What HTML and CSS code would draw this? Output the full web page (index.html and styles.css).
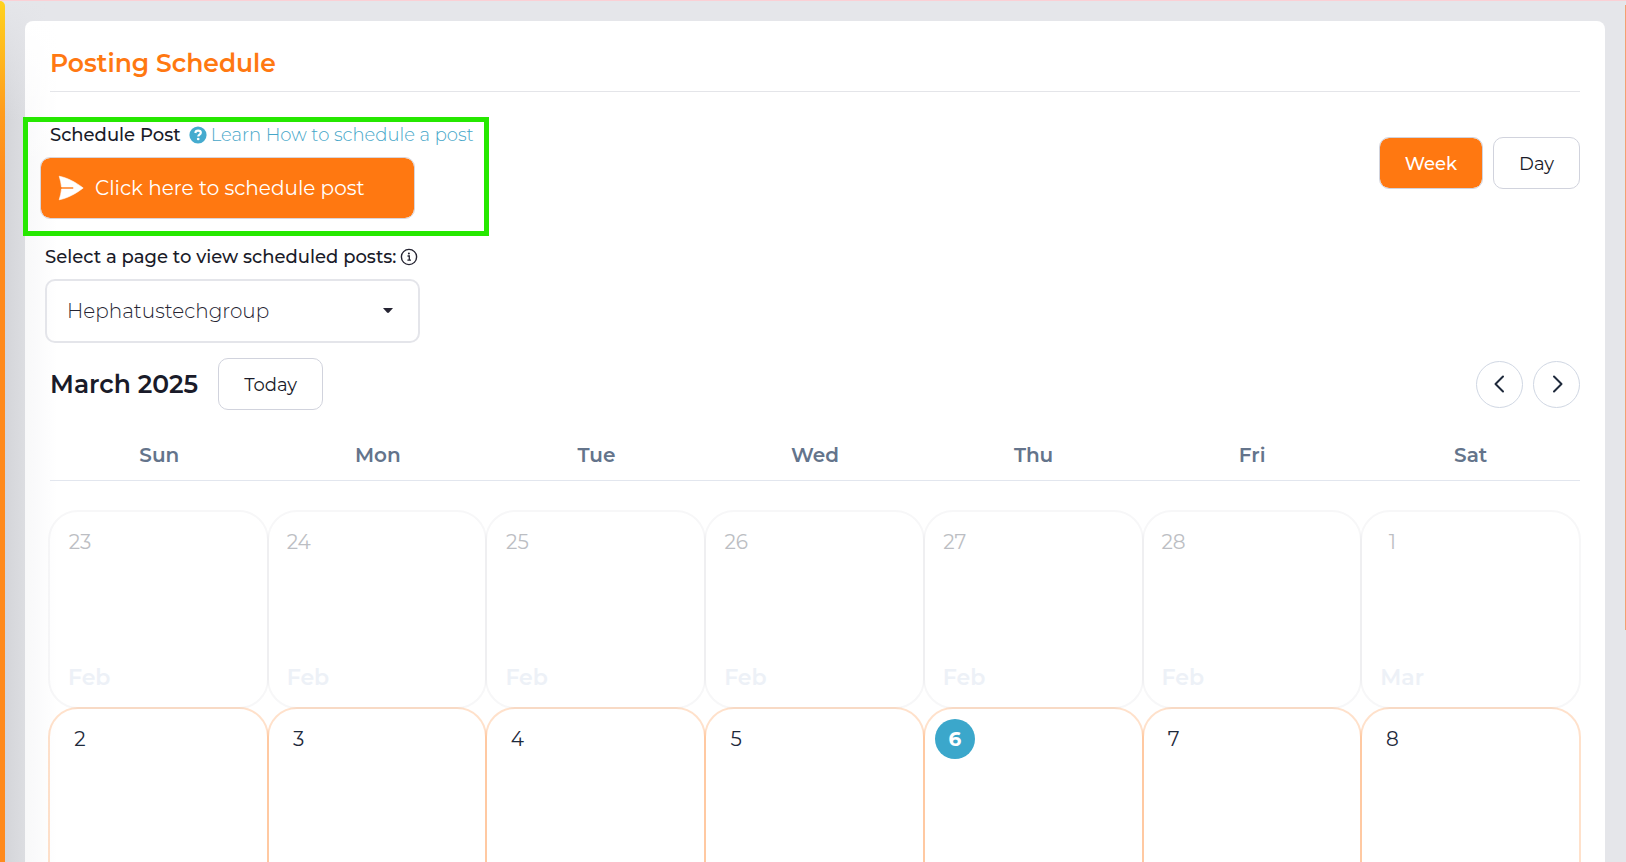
FILE: index.html
```html
<!DOCTYPE html>
<html lang="en">
<head>
<meta charset="utf-8">
<meta name="viewport" content="width=device-width, initial-scale=1">
<title>Posting Schedule</title>
<link rel="stylesheet" href="styles.css">
</head>
<body>
<div class="page">
  <div class="rail"></div>
  <main class="main">
    <section class="card">
      <header class="card-header"><h1 class="title">Posting Schedule</h1></header>

      <div class="toolbar">
        <div class="schedule">
          <div class="schedule-head">
            <h2 class="label">Schedule Post</h2>
            <a class="help" href="#">
              <svg class="help-icon" viewBox="0 0 18 18" aria-hidden="true"><circle cx="9" cy="9" r="8.6" fill="#45abcf"/><path d="M6.300 7C6.500 5.300 7.500 4.600 9.100 4.600c1.600 0 2.700.8 2.700 2.200 0 1.900-2.500 1.800-2.500 3.600" fill="none" stroke="#fff" stroke-width="2.200"/><circle cx="9.200" cy="13" r="1.350" fill="#fff"/></svg>
              <span>Learn How to schedule a post</span>
            </a>
          </div>
          <button class="cta" type="button">
            <svg class="cta-icon" viewBox="0 0 26 26" aria-hidden="true"><path d="M1.200 1.200C10 3 18 7.500 25.200 13 18 18.500 10 23 1.200 24.800 2.300 21 3.200 18 3.500 14H15.500V12H3.500C3.200 8 2.300 5 1.200 1.200Z" fill="#fff" stroke="#fff" stroke-width=".6" stroke-linejoin="round"/></svg>
            <span>Click here to schedule post</span>
          </button>
          <div class="highlight"></div>
        </div>
        <div class="views">
          <button class="btn btn-active" type="button">Week</button>
          <button class="btn" type="button">Day</button>
        </div>
      </div>

      <div class="picker">
        <div class="picker-head">
          <label class="label" for="page-select">Select a page to view scheduled posts:</label>
          <svg class="info-icon" viewBox="0 0 18 18" aria-hidden="true"><circle cx="9" cy="9" r="7.6" fill="none" stroke="#252432" stroke-width="1.400"/><path d="M7.500 8H9.300V12M7.400 12.200H11" fill="none" stroke="#252432" stroke-width="1.300"/><circle cx="8.900" cy="5.500" r="1" fill="#252432"/></svg>
        </div>
        <div class="select-wrap">
          <select class="select" id="page-select"><option>Hephatustechgroup</option></select>
          <svg class="caret" viewBox="0 0 10 6" aria-hidden="true"><path d="M0 0H10L6 4.500Q5 5.400 4 4.500Z" fill="#252432"/></svg>
        </div>
      </div>

      <div class="month-bar">
        <h2 class="month">March 2025</h2>
        <button class="btn" type="button">Today</button>
        <div class="nav">
          <button class="round" type="button" aria-label="Previous"><svg viewBox="0 0 18 18"><path d="M12 1.500 4.500 9 12 16.500"/></svg></button>
          <button class="round" type="button" aria-label="Next"><svg viewBox="0 0 18 18"><path d="M6 1.500 13.500 9 6 16.500"/></svg></button>
        </div>
      </div>

      <div class="weekdays"><span>Sun</span><span>Mon</span><span>Tue</span><span>Wed</span><span>Thu</span><span>Fri</span><span>Sat</span></div>

      <div class="days">
        <div class="day past"><span class="num">23</span><span class="mon">Feb</span></div>
        <div class="day past"><span class="num">24</span><span class="mon">Feb</span></div>
        <div class="day past"><span class="num">25</span><span class="mon">Feb</span></div>
        <div class="day past"><span class="num">26</span><span class="mon">Feb</span></div>
        <div class="day past"><span class="num">27</span><span class="mon">Feb</span></div>
        <div class="day past"><span class="num">28</span><span class="mon">Feb</span></div>
        <div class="day past"><span class="num">1</span><span class="mon">Mar</span></div>
        <div class="day"><span class="num">2</span></div>
        <div class="day"><span class="num">3</span></div>
        <div class="day"><span class="num">4</span></div>
        <div class="day"><span class="num">5</span></div>
        <div class="day"><span class="num today">6</span></div>
        <div class="day"><span class="num">7</span></div>
        <div class="day"><span class="num">8</span></div>
      </div>
    </section>
  </main>
  <div class="thumb"></div>
</div>
</body>
</html>
```
FILE: styles.css
```css
* { box-sizing: border-box; }
body {
  margin: 0;
  font-family: Montserrat, Inter, "Open Sans", sans-serif;
  color: #1a1b29;
  background: #e5e6ea;
}
h1, h2 { margin: 0; }
button, select { font-family: inherit; color: inherit; }
button { cursor: pointer; }
.page {
  position: relative;
  display: flex;
  height: 100vh;
  overflow: hidden;
  border-top: 1px solid #fbd0d5;
}
.rail {
  flex: none;
  width: 5px;
  border-top-right-radius: 5px;
  background: linear-gradient(#ffd21e, #ff9d1d 110px, #ff8a1c 180px);
}
.main {
  flex: 1;
  min-width: 0;
  padding: 20px 21px 0 20px;
  background: linear-gradient(#e5e6ea, rgba(229, 230, 234, 0) 120px), linear-gradient(90deg, #d4d5d9, #dcdde1 20px, #e5e6ea 40px);
}
.card {
  min-height: 100%;
  padding: 0 25px;
  border-radius: 8px;
  background: linear-gradient(#fff, rgba(255, 255, 255, 0) 150px), linear-gradient(90deg, #f8f8f9, #fff 32px);
}
.card-header {
  display: flex;
  align-items: center;
  height: 71px;
  padding-top: 14px;
  border-bottom: 1px solid #e4e5e9;
}
.title, .month { font-size: 25px; line-height: 32px; font-weight: 600; }
.title { color: #ff7811; }
.toolbar { display: flex; justify-content: space-between; padding-top: 32px; }
.schedule { position: relative; }
.schedule-head, .help, .picker-head { display: flex; align-items: center; }
.schedule-head { gap: 8px; height: 22px; }
.label { font-size: 18px; line-height: 22px; font-weight: 500; }
.help { gap: 4px; font-size: 18px; line-height: 22px; font-weight: 300; color: #45a6c8; text-decoration: none; }
.help-icon, .info-icon { flex: none; width: 18px; height: 18px; }
.cta {
  display: flex;
  align-items: center;
  gap: 11px;
  width: 375px;
  height: 62px;
  margin: 11px 0 0 -10px;
  padding: 0 17px;
  border: 1px solid #d9d5da;
  border-radius: 10px;
  background: #ff7811;
  background-clip: padding-box;
  color: #fff;
  font-size: 20px;
}
.cta-icon { width: 26px; height: 26px; }
.highlight {
  position: absolute;
  top: -7px;
  left: -27px;
  width: 466px;
  height: 119px;
  border: 5px solid #26e800;
  pointer-events: none;
}
.views { display: flex; gap: 10px; padding-top: 13px; }
.btn {
  height: 52px;
  padding: 1px 25px 0;
  border: 1px solid #d1d3dd;
  border-radius: 10px;
  background: #fff;
  font-size: 18px;
}
.btn-active { background: #ff7811; background-clip: padding-box; color: #fff; font-weight: 500; }
.picker { width: 375px; margin: 26px 0 0 -5px; }
.picker-head { gap: 4px; height: 24px; white-space: nowrap; }
.select-wrap { position: relative; margin-top: 10px; }
.select {
  width: 100%;
  height: 64px;
  padding: 0 20px;
  border: 2px solid #e4e5ea;
  border-radius: 10px;
  background: transparent;
  appearance: none;
  font-size: 20px;
  font-weight: 300;
  color: #252432;
}
.caret { position: absolute; top: 29px; right: 27px; width: 10px; height: 6px; pointer-events: none; }
.month-bar { display: flex; align-items: center; gap: 20px; margin-top: 15px; }
.nav { display: flex; gap: 10px; margin-left: auto; }
.round {
  display: grid;
  place-items: center;
  width: 47px;
  height: 47px;
  padding: 0;
  border: 1px solid #d0d7e3;
  border-radius: 50%;
  background: #fff;
}
.round svg { width: 18px; height: 18px; fill: none; stroke: #1e293b; stroke-width: 2; stroke-linecap: round; stroke-linejoin: round; }
.weekdays, .days { display: grid; grid-template-columns: repeat(7, 1fr); }
.weekdays {
  height: 71px;
  padding-top: 32px;
  border-bottom: 1px solid #e2e6ee;
  font-size: 20px;
  line-height: 26px;
  font-weight: 600;
  text-align: center;
  color: #64748b;
}
.days { grid-auto-rows: 197px; margin-left: -1px; padding-top: 30px; }
.day {
  display: flex;
  flex-direction: column;
  align-items: flex-start;
  justify-content: space-between;
  margin: -1px;
  padding: 10px 10px 16px;
  border: 2px solid rgba(255, 120, 17, .22);
  border-radius: 30px;
}
.past { border-color: rgba(30, 41, 59, .035); }
.num {
  display: grid;
  place-items: center;
  width: 40px;
  height: 40px;
  border-radius: 50%;
  font-size: 20px;
  color: #1e293b;
}
.past .num { color: #bcbec3; }
.today { background: #3ba7cb; color: #fff; font-weight: 700; }
.mon { padding-left: 8px; font-size: 22px; line-height: 26px; font-weight: 600; color: #edf1f7; }
.thumb {
  position: absolute;
  top: 4px;
  right: 0;
  width: 1px;
  height: 625px;
  background: #f5a070;
}
```
